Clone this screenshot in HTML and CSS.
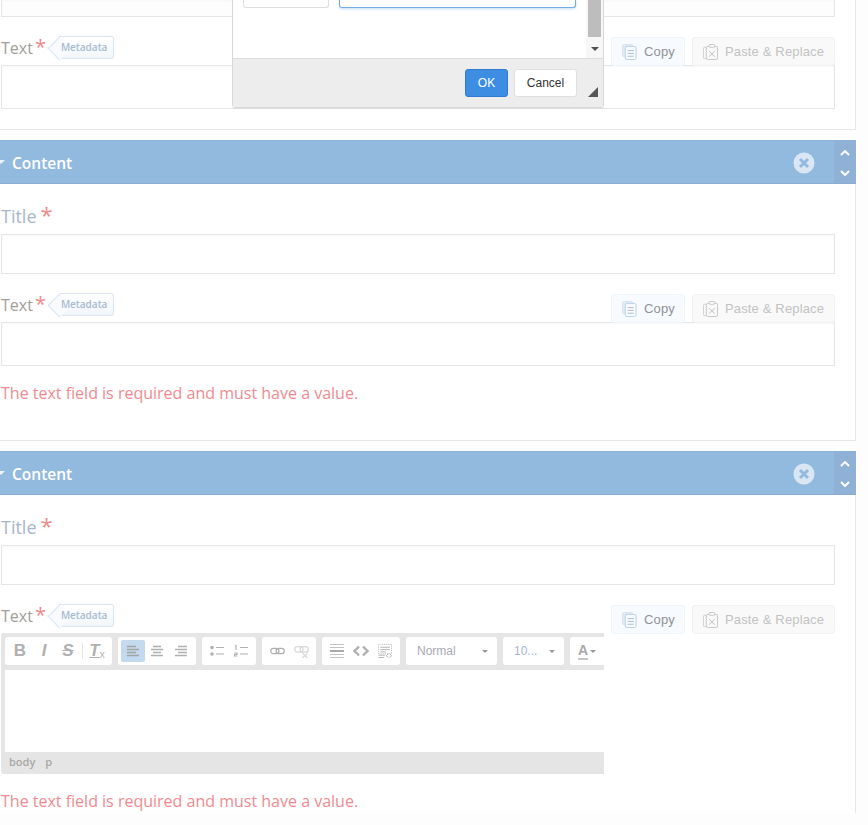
FILE: index.html
```html
<!DOCTYPE html>
<html lang="en">
<head>
<meta charset="utf-8">
<title>Content</title>
<link rel="stylesheet" href="styles.css">
</head>
<body>
<svg class="defs" width="0" height="0" aria-hidden="true">
  <symbol id="i-copy" viewBox="0 0 16 17">
    <rect x="0.5" y="0.5" width="11" height="13" rx="2" fill="#e3ecf6" stroke="#d3e0ef"/>
    <rect x="3.5" y="2.5" width="11.5" height="14" rx="2" fill="#f7fbff" stroke="#b5cfea"/>
    <path d="M6 7h6.5M6 10h6.5M6 13h6.5" stroke="#a9b9cb" fill="none"/>
  </symbol>
  <symbol id="i-paste" viewBox="0 0 16 17">
    <path d="M3.5 3.5H1.5a1 1 0 0 0-1 1v10a1 1 0 0 0 1 1h2" stroke="#cfcfcf" fill="none"/>
    <rect x="3.5" y="2.5" width="12" height="14" rx="1.5" fill="none" stroke="#c4c4c4"/>
    <rect x="6.5" y="0.5" width="6" height="3" rx="1" fill="#f9f9f9" stroke="#c4c4c4"/>
    <path d="M6.5 7.5l6 6M12.5 7.5l-6 6" stroke="#bdbdbd" fill="none"/>
  </symbol>
  <symbol id="i-close" viewBox="0 0 22 22">
    <circle cx="11" cy="11" r="10.5" fill="#dae6f3"/>
    <path d="M7 7l8 8M15 7l-8 8" stroke="#92badf" stroke-width="3" fill="none"/>
  </symbol>
  <symbol id="i-up" viewBox="0 0 10 6"><path d="M1 5l4-4 4 4" stroke="#fff" stroke-width="2" fill="none"/></symbol>
  <symbol id="i-down" viewBox="0 0 10 6"><path d="M1 1l4 4 4-4" stroke="#fff" stroke-width="2" fill="none"/></symbol>
</svg>

<main class="page">
  <section class="panel">
    <div class="input input-cut"></div>
    <div class="row row-spaced">
      <div class="label-group">
        <span class="label">Text</span><span class="star star-sm">*</span>
        <span class="tag"><span class="tag-text">Metadata</span></span>
      </div>
      <div class="actions">
        <button class="btn btn-copy"><svg class="btn-icon"><use href="#i-copy"/></svg>Copy</button>
        <button class="btn btn-paste"><svg class="btn-icon"><use href="#i-paste"/></svg>Paste &amp; Replace</button>
      </div>
    </div>
    <div class="input input-text"></div>
  </section>

  <section class="panel">
    <header class="head">
      <span class="caret"></span>
      <h2 class="head-title">Content</h2>
      <svg class="head-close"><use href="#i-close"/></svg>
      <div class="head-move">
        <svg class="chev"><use href="#i-up"/></svg>
        <svg class="chev"><use href="#i-down"/></svg>
      </div>
    </header>
    <div class="body">
      <div class="title-row"><span class="label label-title">Title</span><span class="star">*</span></div>
      <div class="input input-title"></div>
      <div class="row row-spaced">
        <div class="label-group">
          <span class="label">Text</span><span class="star star-sm">*</span>
          <span class="tag"><span class="tag-text">Metadata</span></span>
        </div>
        <div class="actions">
          <button class="btn btn-copy"><svg class="btn-icon"><use href="#i-copy"/></svg>Copy</button>
          <button class="btn btn-paste"><svg class="btn-icon"><use href="#i-paste"/></svg>Paste &amp; Replace</button>
        </div>
      </div>
      <div class="input input-text"></div>
      <p class="error">The text field is required and must have a value.</p>
    </div>
  </section>

  <section class="panel panel-last">
    <header class="head">
      <span class="caret"></span>
      <h2 class="head-title">Content</h2>
      <svg class="head-close"><use href="#i-close"/></svg>
      <div class="head-move">
        <svg class="chev"><use href="#i-up"/></svg>
        <svg class="chev"><use href="#i-down"/></svg>
      </div>
    </header>
    <div class="body">
      <div class="title-row"><span class="label label-title">Title</span><span class="star">*</span></div>
      <div class="input input-title"></div>
      <div class="row row-spaced">
        <div class="label-group">
          <span class="label">Text</span><span class="star star-sm">*</span>
          <span class="tag"><span class="tag-text">Metadata</span></span>
        </div>
        <div class="actions">
          <button class="btn btn-copy"><svg class="btn-icon"><use href="#i-copy"/></svg>Copy</button>
          <button class="btn btn-paste"><svg class="btn-icon"><use href="#i-paste"/></svg>Paste &amp; Replace</button>
        </div>
      </div>
      <div class="editor">
        <div class="toolbar">
          <div class="group">
            <span class="tool t-bold">B</span>
            <span class="tool t-italic">I</span>
            <span class="tool t-strike">S</span>
            <span class="sep"></span>
            <span class="tool t-clear"><span class="t-clear-t">T</span><sub>x</sub></span>
          </div>
          <div class="group">
            <span class="tool tool-on"><svg class="ico" viewBox="0 0 14 12"><path d="M1 1.5h9M1 4.5h12M1 7.5h9M1 10.5h12" stroke="#a3a3a3" stroke-width="1.6"/></svg></span>
            <span class="tool"><svg class="ico" viewBox="0 0 14 12"><path d="M3 1.5h8M1 4.5h12M3 7.5h8M1 10.5h12" stroke="#b0b0b0" stroke-width="1.6"/></svg></span>
            <span class="tool"><svg class="ico" viewBox="0 0 14 12"><path d="M4 1.5h9M1 4.5h12M4 7.5h9M1 10.5h12" stroke="#b0b0b0" stroke-width="1.6"/></svg></span>
          </div>
          <div class="group">
            <span class="tool"><svg class="ico" viewBox="0 0 14 12"><circle cx="2" cy="2.5" r="1.8" fill="#b0b0b0"/><circle cx="2" cy="9" r="1.8" fill="#b0b0b0"/><path d="M6 2.5h8M6 9h8" stroke="#b0b0b0" stroke-width="1.2"/></svg></span>
            <span class="tool"><svg class="ico" viewBox="0 0 14 12"><path d="M1 1l1-.5V5M0.5 8h2.5v1.5H.5V11h2.8M6 2.5h8M6 9h8" stroke="#b0b0b0" fill="none" stroke-width="1.1"/></svg></span>
          </div>
          <div class="group">
            <span class="tool"><svg class="ico ico-wide" viewBox="0 0 14 12"><rect x="0.7" y="3" width="7.6" height="5" rx="2.4" fill="none" stroke="#b0b0b0" stroke-width="1.2"/><rect x="5.7" y="3" width="7.6" height="5" rx="2.4" fill="none" stroke="#b0b0b0" stroke-width="1.2"/></svg></span>
            <span class="tool"><svg class="ico ico-wide" viewBox="0 0 14 12"><rect x="0.7" y="1.5" width="7.6" height="5" rx="2.4" fill="none" stroke="#d8d8d8" stroke-width="1.2"/><rect x="5.7" y="1.5" width="7.6" height="5" rx="2.4" fill="none" stroke="#d8d8d8" stroke-width="1.2"/><path d="M8 7.5l4.5 4.5M12.5 7.5L8 12" stroke="#d8d8d8" stroke-width="1.2"/></svg></span>
          </div>
          <div class="group">
            <span class="tool"><svg class="ico ico-tall" viewBox="0 0 14 16"><path d="M0 1.5h14M0 4.5h14M0 11.5h14M0 14.5h14" stroke="#c4c4c4"/><path d="M0 8h14" stroke="#a8a8a8" stroke-width="2"/></svg></span>
            <span class="tool"><svg class="ico ico-code" viewBox="0 0 16 12"><path d="M6 1.5L1.5 6 6 10.5M10 1.5L14.5 6 10 10.5" stroke="#b0b0b0" stroke-width="2.4" fill="none"/></svg></span>
            <span class="tool"><svg class="ico ico-tall" viewBox="0 0 15 15"><rect x="0.5" y="0.5" width="14" height="10" fill="none" stroke="#b8b8b8" stroke-dasharray="1 1"/><path d="M2.5 3.5h10M2.5 6h10M2.5 8.5h6M.5 12h7M.5 14.5h6" stroke="#b0b0b0"/><path d="M11 10.5l-2 2 2 2M12.5 10.5l2 2-2 2" stroke="#a8a8a8" fill="none"/></svg></span>
          </div>
          <div class="group combo combo-format"><span class="combo-text">Normal</span><span class="arrow"></span></div>
          <div class="group combo combo-size"><span class="combo-text">10...</span><span class="arrow"></span></div>
          <div class="group combo-color"><span class="t-color">A</span><span class="arrow"></span></div>
        </div>
        <div class="editor-area"></div>
        <div class="pathbar"><span>body</span><span>p</span></div>
      </div>
      <p class="error">The text field is required and must have a value.</p>
    </div>
  </section>

  <div class="dialog">
    <div class="dialog-body">
      <div class="dialog-fields">
        <span class="dlg-select"></span>
        <span class="dlg-input"></span>
      </div>
      <div class="scroll"><span class="scroll-thumb"></span><span class="scroll-down"></span></div>
    </div>
    <div class="dialog-foot">
      <button class="dlg-btn dlg-ok">OK</button>
      <button class="dlg-btn dlg-cancel">Cancel</button>
      <span class="resizer"></span>
    </div>
  </div>
</main>
</body>
</html>
```

FILE: styles.css
```css
* { box-sizing: border-box; }
html, body { margin: 0; padding: 0; }
body {
  background: #fdfdfd;
  font-family: "Open Sans", sans-serif;
  overflow: hidden;
  height: 825px;
}
.defs { position: absolute; }
.page { position: relative; width: 856px; }

.panel {
  background: #fff;
  border-right: 1px solid #e6e6e6;
  border-bottom: 1px solid #e6e6e6;
  margin-bottom: 10px;
  padding-bottom: 20px;
}
.panel > .input, .panel > .row { margin-left: 1px; width: 834px; }
.panel-last { border-bottom: 0; margin-bottom: 0; padding-bottom: 0; }

.head {
  display: flex;
  align-items: center;
  height: 44px;
  margin-right: -1px;
  padding-top: 2px;
  background: #92badf;
  border-top: 1px solid #8cb3d8;
  border-bottom: 1px solid #8aaccf;
}
.caret {
  width: 0;
  height: 0;
  margin: -2px 0 0 -3px;
  border-left: 4px solid transparent;
  border-right: 4px solid transparent;
  border-top: 4px solid #eaf2fa;
}
.head-title {
  margin: 0 0 0 7px;
  flex: 1;
  color: #fff;
  font-size: 15.5px;
  font-weight: 600;
  line-height: 22px;
}
.head-close { width: 22px; height: 22px; margin-right: 19px; }
.head-move {
  display: flex;
  flex-direction: column;
  align-items: center;
  justify-content: space-between;
  width: 22px;
  height: 42px;
  margin-top: -2px;
  padding: 9px 0 7px;
  background: #8fb1d5;
}
.chev { width: 10px; height: 6px; }

.body { width: 835px; padding: 20px 0 0 1px; margin-bottom: -20px; }

.title-row { display: flex; align-items: flex-start; height: 30px; }
.label { font-size: 16px; line-height: 22px; color: #a19d99; font-weight: 500; }
.label-title { color: #a9b6ca; font-size: 18px; line-height: 24px; }
.star { color: #f08a8a; font-size: 22px; line-height: 21px; margin-left: 4px; }
.star-sm { font-size: 20px; line-height: 19px; margin-left: 2px; }

.row { display: flex; justify-content: space-between; align-items: flex-start; height: 28px; }
.row-spaced { margin-top: 20px; }
.label-group { display: flex; align-items: flex-start; }

.tag {
  position: relative;
  display: block;
  height: 23px;
  margin: -1px 0 0 13px;
  padding: 0 6px 0 2px;
  background: linear-gradient(#ffffff, #f1f6fb);
  border: 1px solid #dce6f1;
  border-left: 0;
  border-radius: 0 3px 3px 0;
  color: #a9bad0;
  font-size: 10px;
  font-weight: 600;
  line-height: 21px;
}
.tag::before {
  content: "";
  position: absolute;
  top: 2.5px;
  left: -8px;
  width: 16px;
  height: 16px;
  transform: rotate(45deg);
  background: #f8fafd;
  border-left: 1px solid #dce6f1;
  border-bottom: 1px solid #dce6f1;
}
.tag-text { position: relative; }

.actions { display: flex; gap: 7px; }
.btn {
  display: flex;
  align-items: center;
  height: 29px;
  padding: 0 0 0 10px;
  border-radius: 3px;
  font-family: "Liberation Sans", sans-serif;
  font-size: 13px;
  letter-spacing: 0.15px;
}
.btn-copy { width: 74px; background: #f7fbff; border: 1px solid #eef4fa; color: #8f9296; }
.btn-paste { width: 143px; background: #f9f9f9; border: 1px solid #f2f2f2; color: #c2c2c2; }
.btn-icon { width: 15px; height: 16px; margin-right: 7px; flex: none; }

.input {
  background: #fff;
  border: 1px solid #e6e6e6;
  box-shadow: inset 0 1px 2px rgba(0, 0, 0, 0.03);
}
.input-cut { height: 17px; border-top: 0; background: #fdfdfd; }
.input-title { height: 40px; width: 834px; }
.input-text { height: 44px; width: 834px; }

.error {
  margin: 15px 0 35px;
  color: #f28a8f;
  font-size: 16px;
  font-weight: 400;
  line-height: 24px;
}

.editor {
  width: 603px;
  height: 141px;
  overflow: hidden;
  display: flex;
  flex-direction: column;
  background: #e5e5e5;
  border-radius: 3px 0 0 3px;
}
.toolbar { display: flex; gap: 6px; flex: none; padding: 4px 0 4px 4px; height: 37px; }
.group {
  display: flex;
  flex: none;
  align-items: center;
  height: 28px;
  padding: 0 3px;
  background: #fff;
  border-radius: 3px;
}
.tool {
  display: flex;
  align-items: center;
  justify-content: center;
  width: 24px;
  height: 22px;
  border-radius: 2px;
  color: #b0b0b0;
  font-family: "Liberation Sans", sans-serif;
  font-size: 17px;
  font-weight: 700;
}
.tool-on { background: #c3d9ed; }
.t-italic { font-style: italic; }
.t-strike { text-decoration: line-through; font-style: italic; }
.t-clear-t { font-style: italic; text-decoration: underline; }
.t-clear sub { margin-top: 8px; font-size: 10px; line-height: 0; font-weight: 400; }
.sep { width: 1px; height: 16px; margin: 0 2px; background: #e4e4e4; }
.ico { width: 14px; height: 12px; }
.ico-wide { width: 15px; height: 13px; }
.ico-code { width: 16px; }
.ico-tall { height: 16px; }

.combo {
  justify-content: space-between;
  padding: 0 9px 0 11px;
  color: #a9a9b4;
  font-family: "Liberation Sans", sans-serif;
  font-size: 12px;
}
.combo-format { width: 91px; }
.combo-size { width: 61px; color: #9fb6d3; }
.combo-color { width: 40px; padding: 0 0 0 8px; gap: 2px; }
.t-color {
  color: #a8a8a8;
  font-family: "Liberation Sans", sans-serif;
  font-size: 14px;
  font-weight: 700;
  line-height: 15px;
  border-bottom: 2px solid #c6c6c6;
}
.arrow {
  width: 0;
  height: 0;
  border-left: 3px solid transparent;
  border-right: 3px solid transparent;
  border-top: 3px solid #9a9a9a;
}
.editor-area { height: 82px; margin-left: 4px; background: #fff; flex: none; }
.pathbar {
  display: flex;
  gap: 10px;
  padding-left: 8px;
  color: #a8a8a8;
  font-size: 11px;
  font-weight: 600;
  line-height: 19px;
}

.dialog {
  position: absolute;
  top: -1px;
  left: 232px;
  width: 372px;
  height: 109px;
  display: flex;
  flex-direction: column;
  background: #fff;
  border: 1px solid #d8d8d8;
  border-radius: 0 0 3px 3px;
  box-shadow: 0 1px 1px rgba(0, 0, 0, 0.04);
}
.dialog-body { position: relative; flex: 1; display: flex; justify-content: space-between; }
.dialog-fields { display: flex; gap: 10px; height: 8px; margin-left: 10px; }
.dlg-select {
  width: 86px;
  border: 1px solid #dedede;
  border-top: 0;
  border-radius: 0 0 3px 3px;
}
.dlg-input {
  width: 237px;
  background: #fff;
  border: 1px solid #73ade8;
  border-top: 0;
  border-radius: 0 0 3px 3px;
  box-shadow: 0 1px 3px rgba(100, 170, 235, 0.4);
}
.scroll {
  position: relative;
  width: 17px;
  background: #f7f7f7;
}
.scroll-thumb { position: absolute; top: 0; left: 2px; width: 13px; height: 37px; background: #bdbdbd; }
.scroll-down {
  position: absolute;
  top: 47px;
  left: 5px;
  width: 0;
  height: 0;
  border-left: 4px solid transparent;
  border-right: 4px solid transparent;
  border-top: 4px solid #505050;
}
.dialog-foot {
  position: relative;
  display: flex;
  justify-content: flex-end;
  gap: 6px;
  height: 49px;
  padding: 10px 26px 0 0;
  background: #ededed;
  border-top: 1px solid #dcdcdc;
  flex: none;
}
.dlg-btn {
  height: 28px;
  padding: 0;
  border-radius: 3px;
  font-family: "Liberation Sans", sans-serif;
  font-size: 12px;
}
.dlg-ok { width: 43px; background: #3d8de2; border: 1px solid #2f7ccd; color: #fff; }
.dlg-cancel { width: 63px; background: #fff; border: 1px solid #e0e0e0; color: #333; }
.resizer {
  position: absolute;
  right: 5px;
  bottom: 10px;
  width: 0;
  height: 0;
  border-left: 10px solid transparent;
  border-bottom: 10px solid #555;
}
```
